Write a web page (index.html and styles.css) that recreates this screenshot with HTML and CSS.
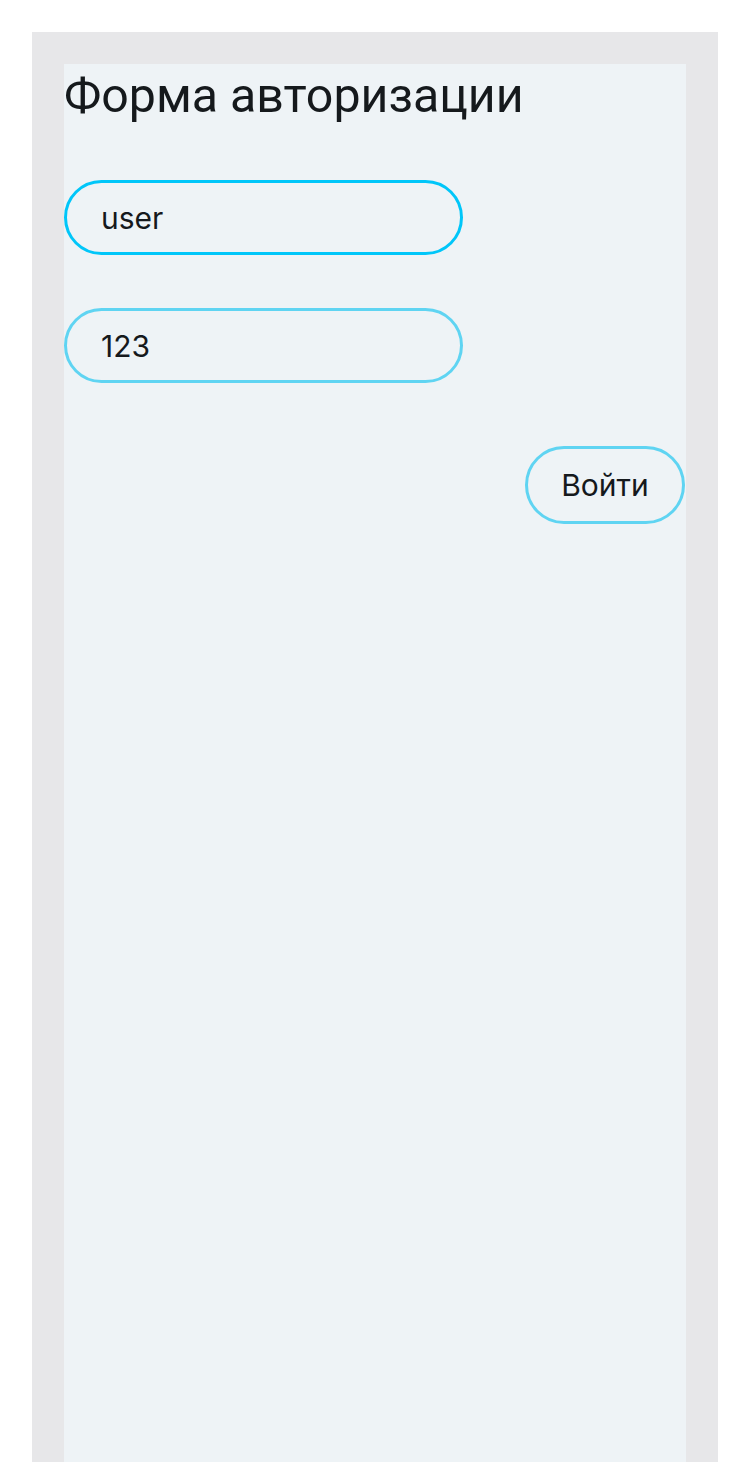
FILE: index.html
```html
<!DOCTYPE html>
<html lang="ru">
<head>
<meta charset="utf-8">
<title>Форма авторизации</title>
<link rel="stylesheet" href="styles.css">
</head>
<body>
<div class="frame">
  <main class="panel">
    <h1 class="title">Форма авторизации</h1>
    <form class="login-form">
      <input class="field is-focused" type="text" value="user">
      <input class="field" type="text" value="123">
      <div class="actions">
        <button class="btn" type="button">Войти</button>
      </div>
    </form>
  </main>
</div>
</body>
</html>
```

FILE: styles.css
```css
* {
  box-sizing: border-box;
}

html, body {
  margin: 0;
  padding: 0;
  background: #ffffff;
}

.frame {
  margin: 32px 32px 0;
  padding: 32px 32px 0;
  background: #e7e7e9;
  min-height: calc(100vh - 32px);
  display: flex;
  flex-direction: column;
}

.panel {
  flex: 1;
  background: #eef3f6;
  display: flex;
  flex-direction: column;
}

.title {
  margin: 0;
  font-family: Roboto, "Liberation Sans", sans-serif;
  font-weight: 400;
  font-size: 48.3px;
  line-height: 64px;
  color: #15191c;
}

.login-form {
  margin-top: 52px;
  display: flex;
  flex-direction: column;
  align-items: flex-start;
}

.field {
  width: 399px;
  height: 75px;
  padding: 0 34px;
  border: 3px solid #5fd4f2;
  border-radius: 38px;
  background: transparent;
  font-family: Inter, "Noto Sans", sans-serif;
  font-size: 30px;
  color: #15191c;
  outline: none;
  margin-bottom: 53px;
}

.field.is-focused {
  border-color: #00c6f9;
}

.actions {
  align-self: stretch;
  display: flex;
  justify-content: flex-end;
  margin-top: 10px;
}

.btn {
  width: 160px;
  height: 78px;
  margin-right: 1px;
  border: 3px solid #5fd4f2;
  border-radius: 39px;
  background: transparent;
  font-family: Inter, "Noto Sans", sans-serif;
  font-size: 30px;
  color: #15191c;
  padding: 0;
}
```
